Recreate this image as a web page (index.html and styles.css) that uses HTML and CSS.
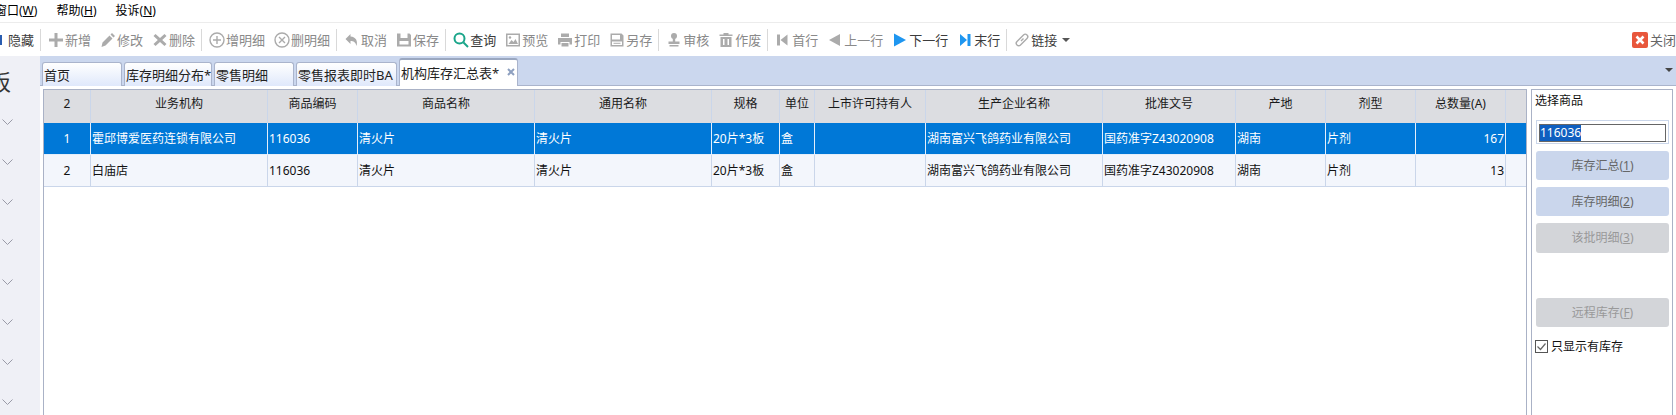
FILE: index.html
```html
<!DOCTYPE html>
<html lang="zh-CN">
<head>
<meta charset="utf-8">
<title>机构库存汇总表</title>
<link rel="stylesheet" href="styles.css">
</head>
<body>
<div class="app">
  <nav class="menu">
    <span class="menu-item menu-cut">窗口(<u>W</u>)</span>
    <span class="menu-item">帮助(<u>H</u>)</span>
    <span class="menu-item">投诉(<u>N</u>)</span>
  </nav>

  <div class="toolbar">
    <div class="tool tool-first on"><svg class="ic-hide" viewBox="0 0 2 10"><rect width="2" height="10" fill="#2a5db0"/></svg><span>隐藏</span></div>
    <i class="sep"></i>
    <div class="tool"><svg viewBox="0 0 16 16"><path d="M6.500 1h3v5.500H15v3H9.500V15h-3V9.500H1v-3h5.500z"/></svg><span>新增</span></div>
    <div class="tool"><svg viewBox="0 0 16 16"><path d="M12 1l3 3-1.500 1.500-3-3zM9.500 3.500l3 3L5.500 13.500 1.500 15l1-4.500z"/></svg><span>修改</span></div>
    <div class="tool"><svg viewBox="0 0 16 16"><path d="M1.500 4l2-2L8 6l4.500-4 2 2L10.200 8l4.300 4-2 2L8 10l-4.500 4-2-2L5.800 8z"/></svg><span>删除</span></div>
    <i class="sep"></i>
    <div class="tool"><svg viewBox="0 0 16 16"><circle class="ln" cx="8" cy="8" r="7"/><path class="ln" d="M8 4v8M4 8h8"/></svg><span>增明细</span></div>
    <div class="tool"><svg viewBox="0 0 16 16"><circle class="ln" cx="8" cy="8" r="7"/><path class="ln" d="M5 5l6 6M11 5l-6 6"/></svg><span>删明细</span></div>
    <i class="sep"></i>
    <div class="tool"><svg viewBox="0 0 16 16"><path d="M6.500 2L1.500 7l5 5V9c3 0 5 1 6 5 1.500-5-.5-9-6-9.500z"/></svg><span>取消</span></div>
    <div class="tool"><svg viewBox="0 0 16 16"><path fill-rule="evenodd" d="M1 1.500h12.500l1.500 1.500v11.500H1zM4.500 1.500v4.500h7V1.500zM3.500 9v3.500h9V9z"/></svg><span>保存</span></div>
    <i class="sep"></i>
    <div class="tool on"><svg viewBox="0 0 16 16"><circle class="g" cx="6.500" cy="6.500" r="5"/><path class="g" d="M10.500 10.500l4.500 4.500"/></svg><span>查询</span></div>
    <div class="tool"><svg viewBox="0 0 16 16"><path fill-rule="evenodd" d="M1 1.500h14v13H1zM2.500 3v10h11V3z"/><path d="M3.500 12l3-4 2 2 2-3 2.500 5z"/><circle cx="5" cy="5.500" r="1.200"/></svg><span>预览</span></div>
    <div class="tool"><svg viewBox="0 0 16 16"><path fill-rule="evenodd" d="M4 1.500h8V5H4zM1 6h14v6.500h-2.500V10h-9v2.500H1z"/><path d="M4.500 11h7v3.500h-7z"/></svg><span>打印</span></div>
    <div class="tool"><svg viewBox="0 0 16 16"><path fill-rule="evenodd" d="M1.500 1.500h11l2 2v11h-13zM3 3v4.500h8V3zM3 9.500v3.500h10V9.500z"/><path d="M4.500 10.800h7v1h-7z"/></svg><span>另存</span></div>
    <i class="sep"></i>
    <div class="tool"><svg viewBox="0 0 16 16"><circle cx="8" cy="4" r="3"/><path d="M6.800 6h2.400v3.500H6.800zM2.500 9.500h11V12h-11zM3.500 13h9v1.500h-9z"/></svg><span>审核</span></div>
    <div class="tool"><svg viewBox="0 0 16 16"><path fill-rule="evenodd" d="M1.500 2.500h4V1h5v1.500h4V4h-13zM2.500 5h11v10h-11zM5 7v6h1.500V7zM9.500 7v6H11V7z"/></svg><span>作废</span></div>
    <i class="sep"></i>
    <div class="tool"><svg viewBox="0 0 16 16"><path d="M2 2.500h3v11H2zM12.500 2.500v11L5.500 8z"/></svg><span>首行</span></div>
    <div class="tool"><svg viewBox="0 0 16 16"><path d="M13 2v12L2 8z"/></svg><span>上一行</span></div>
    <div class="tool on"><svg viewBox="0 0 16 16"><path class="b" d="M2 1.500v13L14 8z"/></svg><span>下一行</span></div>
    <div class="tool on"><svg viewBox="0 0 16 16"><path class="b" d="M3 2v12l7-6zM10.500 2h3v12h-3z"/></svg><span>末行</span></div>
    <i class="sep"></i>
    <div class="tool on"><svg viewBox="0 0 16 16"><path class="ln" d="M6.500 6L3 9.500a2.400 2.400 0 0 0 3.500 3.500L10 9.500M9.500 10l3.500-3.500A2.400 2.400 0 0 0 9.500 3L6 6.500M9.500 6.500l-2.500 2.500"/></svg><span>链接</span><b class="caret"></b></div>
    <div class="tool tool-close"><svg viewBox="0 0 16 16"><rect class="red" width="16" height="16" rx="2"/><path class="wx" d="M4.500 4.500l7 7M11.500 4.500l-7 7"/></svg><span>关闭</span></div>
  </div>

  <div class="main">
    <aside class="side">
      <div class="side-title">板</div>
      <div class="side-row"><svg viewBox="0 0 11 6"><path d="M.5.500l5 5 5-5"/></svg></div>
      <div class="side-row"><svg viewBox="0 0 11 6"><path d="M.5.500l5 5 5-5"/></svg></div>
      <div class="side-row"><svg viewBox="0 0 11 6"><path d="M.5.500l5 5 5-5"/></svg></div>
      <div class="side-row"><svg viewBox="0 0 11 6"><path d="M.5.500l5 5 5-5"/></svg></div>
      <div class="side-row"><svg viewBox="0 0 11 6"><path d="M.5.500l5 5 5-5"/></svg></div>
      <div class="side-row"><svg viewBox="0 0 11 6"><path d="M.5.500l5 5 5-5"/></svg></div>
      <div class="side-row"><svg viewBox="0 0 11 6"><path d="M.5.500l5 5 5-5"/></svg></div>
      <div class="side-row"><svg viewBox="0 0 11 6"><path d="M.5.500l5 5 5-5"/></svg></div>
    </aside>

    <section class="content">
      <div class="tabs">
        <div class="tab t1">首页</div>
        <div class="tab t2">库存明细分布*</div>
        <div class="tab t3">零售明细</div>
        <div class="tab t4">零售报表即时BA</div>
        <div class="tab tab-active">机构库存汇总表*<svg class="tab-x" viewBox="0 0 8 8"><path d="M1 1l6 6M7 1L1 7"/></svg></div>
        <b class="tabs-caret"></b>
      </div>

      <div class="work">
        <div class="grid-wrap">
          <table class="grid">
            <colgroup>
              <col class="w47"><col class="w177"><col class="w90"><col class="w177"><col class="w177"><col class="w68"><col class="w35"><col class="w111"><col class="w177"><col class="w133"><col class="w90"><col class="w90"><col class="w90"><col class="w20">
            </colgroup>
            <thead>
              <tr><th>2</th><th>业务机构</th><th>商品编码</th><th>商品名称</th><th>通用名称</th><th>规格</th><th>单位</th><th>上市许可持有人</th><th>生产企业名称</th><th>批准文号</th><th>产地</th><th>剂型</th><th>总数量(A)</th><th></th></tr>
            </thead>
            <tbody>
              <tr class="sel"><td class="num">1</td><td>霍邱博爱医药连锁有限公司</td><td>116036</td><td>清火片</td><td>清火片</td><td>20片*3板</td><td>盒</td><td></td><td>湖南富兴飞鸽药业有限公司</td><td>国药准字Z43020908</td><td>湖南</td><td>片剂</td><td class="qty">167</td><td></td></tr>
              <tr><td class="num">2</td><td>白庙店</td><td>116036</td><td>清火片</td><td>清火片</td><td>20片*3板</td><td>盒</td><td></td><td>湖南富兴飞鸽药业有限公司</td><td>国药准字Z43020908</td><td>湖南</td><td>片剂</td><td class="qty">13</td><td></td></tr>
            </tbody>
          </table>
        </div>

        <aside class="panel">
          <div class="panel-title">选择商品</div>
          <div class="field"><div class="field-in"><span class="picked">116036</span></div></div>
          <div class="btn">库存汇总(<u>1</u>)</div>
          <div class="btn">库存明细(<u>2</u>)</div>
          <div class="btn btn-off">该批明细(<u>3</u>)</div>
          <div class="btn btn-off btn-far">远程库存(<u>F</u>)</div>
          <div class="check"><svg viewBox="0 0 13 13"><rect x=".5" y=".5" width="12" height="12" fill="#fff" stroke="#555"/><path d="M2.500 6.500l3 3 5-6" fill="none" stroke="#666" stroke-width="1.200"/></svg><span>只显示有库存</span></div>
        </aside>
      </div>
    </section>
  </div>
</div>
</body>
</html>
```

FILE: styles.css
```css
* { box-sizing: border-box; }
html, body { margin: 0; height: 100%; overflow: hidden; background: #fff; }
body { font-family: "Noto Sans", "Noto Sans CJK SC", sans-serif; font-size: 12px; color: #111; }
.app { display: flex; flex-direction: column; width: 1676px; height: 415px; overflow: hidden; }

/* menu */
.menu { display: flex; align-items: center; gap: 19px; height: 23px; flex: none; padding-bottom: 1px; border-bottom: 1px solid #ececec; line-height: 16px; color: #000; overflow: hidden; }
.menu-item { white-space: nowrap; flex: none; }
.menu-cut { margin-left: -5px; }

/* toolbar */
.toolbar { display: flex; align-items: center; height: 33px; flex: none; font-size: 13px; line-height: 18px; color: #8a8a8a; white-space: nowrap; overflow: hidden; }
.tool { display: flex; align-items: center; flex: none; gap: 1px; padding: 0 4px 0 5px; }
.tool svg { width: 16px; height: 16px; flex: none; fill: #ababab; }
.tool.on { color: #3c3c3c; }
.tool-first { padding-left: 0; gap: 6px; }
.tool svg.ic-hide { width: 2px; height: 10px; }
.sep { display: block; width: 1px; height: 22px; margin: 0 2px; background: #d9d9d9; flex: none; }
.ln { fill: none; stroke: #ababab; stroke-width: 1.4; }
.g { fill: none; stroke: #1aa58a; stroke-width: 2; }
.tool svg .b { fill: #1e96f0; }
.tool svg .red { fill: #e8573c; }
.wx { fill: none; stroke: #fff; stroke-width: 2.6; }
.caret { width: 0; height: 0; margin-left: 4px; border-left: 4px solid transparent; border-right: 4px solid transparent; border-top: 4px solid #555; }
.tool-close { margin-left: auto; padding: 0; gap: 2px; color: #666; }

/* main */
.main { display: flex; flex: 1; min-height: 0; }
.side { width: 40px; flex: none; background: #eff0f6; overflow: hidden; }
.side-title { height: 46px; margin-left: -11px; padding-top: 11px; font-size: 22px; line-height: 28px; color: #333; }
.side-row { display: flex; align-items: center; height: 40px; padding-left: 2px; }
.side-row svg { width: 11px; height: 6px; fill: none; stroke: #9a9ba8; stroke-width: 1; }

.content { flex: 1; min-width: 0; display: flex; flex-direction: column; }

/* tabs */
.tabs { display: flex; align-items: flex-end; gap: 2px; height: 30px; flex: none; padding-left: 2px; background: #cbd7ee; border-bottom: 1px solid #aab4cc; font-size: 13px; position: relative; }
.tab { height: 24px; margin-bottom: -1px; padding-left: 1px; line-height: 24px; color: #222; background: linear-gradient(#fff, #dfe8fb); border: 1px solid #aab4cc; border-bottom: 0; border-radius: 3px 3px 0 0; white-space: nowrap; overflow: hidden; flex: none; }
.t1 { width: 80px; }
.t2 { width: 88px; }
.t3 { width: 80px; }
.t4 { width: 101px; }
.tab-active { display: flex; width: 119px; height: 28px; line-height: 26px; background: #fff; border-top: 2px solid #9aa7c0; }
.tab-x { width: 8px; height: 8px; margin: 8px 0 0 8px; fill: none; stroke: #8ea0c0; stroke-width: 2; flex: none; }
.tabs-caret { position: absolute; right: 3px; top: 12px; width: 0; height: 0; border-left: 4px solid transparent; border-right: 4px solid transparent; border-top: 4px solid #444; }

/* work area */
.work { display: flex; flex: 1; min-height: 0; gap: 4px; padding: 3px 3px 0; }
.grid-wrap { width: 1484px; flex: none; background: #fff; border: 1px solid #aab2c6; border-bottom: 0; overflow: hidden; }
.grid { width: 1482px; table-layout: fixed; border-collapse: separate; border-spacing: 0; }
.w47 { width: 47px; } .w177 { width: 177px; } .w90 { width: 90px; } .w68 { width: 68px; } .w35 { width: 35px; } .w111 { width: 111px; } .w133 { width: 133px; } .w20 { width: 20px; }
.grid th { height: 33px; padding: 0 0 6px; font-weight: 400; line-height: 16px; color: #1a1a1a; background: #dcdde1; border-right: 1px solid #cad6ea; white-space: nowrap; }
.grid td { height: 32px; padding: 0 0 0 1px; line-height: 16px; color: #111; background: #f3f6fc; border-right: 1px solid #cad6ea; border-bottom: 1px solid #cad6ea; white-space: nowrap; overflow: hidden; }
.grid th:last-child, .grid td:last-child { border-right: 0; }
.grid .sel td { color: #fff; background: #0078d7; border-color: #e4eefa; }
.grid td.num { padding: 0; text-align: center; }
.grid td.qty { padding: 0 1px 0 0; text-align: right; }

/* side panel */
.panel { width: 142px; flex: none; padding: 0 3px 0 4px; border: 1px solid #aab2c6; border-bottom: 0; }
.panel-title { height: 30px; margin-left: -1px; padding: 3px 0 0; line-height: 16px; color: #111; }
.field { height: 24px; padding: 3px 2px 2px; border: 1px solid #cad6ea; }
.field-in { height: 18px; border: 1px solid #666; line-height: 16px; background: #fff; }
.picked { display: inline-block; height: 16px; color: #fff; background: #0f5fc0; }
.btn { height: 29px; margin-top: 7px; line-height: 29px; text-align: center; color: #666; background: #cad6ec; border-radius: 3px; }
.btn-off { height: 30px; color: #999; background: #d3d5d9; }
.btn-far { height: 29px; margin-top: 45px; }
.check { display: flex; align-items: center; gap: 3px; height: 13px; margin: 13px 0 0 -1px; line-height: 13px; color: #111; }
.check svg { width: 13px; height: 13px; flex: none; }
```
